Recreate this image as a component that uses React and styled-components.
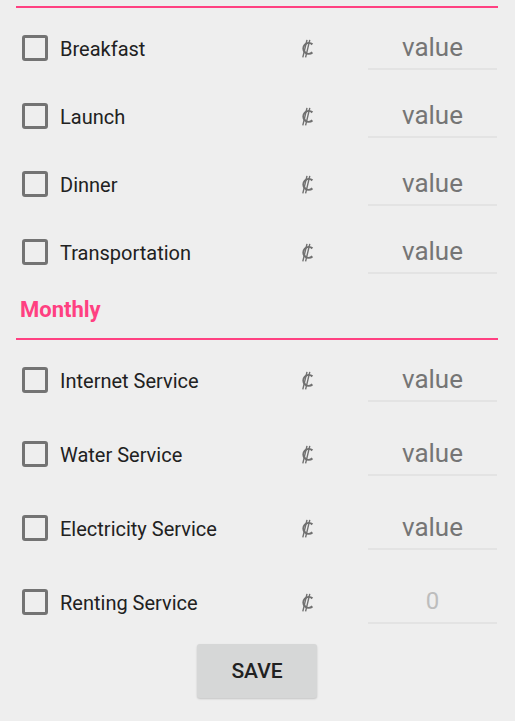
import React from "react";
import styled, { createGlobalStyle } from "styled-components";

const Global = createGlobalStyle`
  html, body { margin: 0; padding: 0; background: #eeeeee; }
  body { font-family: Roboto, "Noto Sans", "DejaVu Sans", sans-serif; }
  * { box-sizing: border-box; }
`;

const Page = styled.div`
  width: 515px;
  min-height: 721px;
  background: #eeeeee;
  padding: 6px 17px 0 16px;
  display: flex;
  flex-direction: column;
`;

const Divider = styled.div`
  height: 2px;
  background: #ff4081;
`;

const Section = styled.div`
  display: flex;
  flex-direction: column;
  padding-top: ${(p) => p.$top}px;
`;

const Row = styled.div`
  height: ${(p) => p.$h}px;
  display: grid;
  grid-template-columns: 1fr 68px 129px;
  align-items: center;
  padding-left: 6px;
  padding-right: 1px;
`;

const CheckLabel = styled.label`
  display: flex;
  align-items: center;
  gap: 12px;
  font-size: 20px;
  color: #212121;
  cursor: pointer;
  padding-top: 1px;
`;

const Box = styled.span`
  width: 26px;
  height: 26px;
  border: 3px solid #737373;
  border-radius: 3px;
  flex: none;
  margin-top: -1px;
`;

const Currency = styled.svg`
  width: 14px;
  height: 19px;
  display: block;
  margin-top: 1px;
`;

const Field = styled.div`
  height: 44px;
  border-bottom: 2px solid #e3e3e3;
  display: flex;
  align-items: center;
  justify-content: center;
  font-size: ${(p) => (p.$light ? 24 : 26)}px;
  color: ${(p) => (p.$light ? "#bdbdbd" : "#757575")};
`;

const Header = styled.div`
  padding: 10px 0 14px 4px;
  font-size: 22px;
  line-height: 28px;
  font-weight: 700;
  color: #ff4081;
`;

const ButtonWrap = styled.div`
  display: flex;
  justify-content: center;
  padding-top: 5px;
`;

const SaveButton = styled.button`
  width: 120px;
  height: 54px;
  border: none;
  border-radius: 3px;
  background: #d6d7d7;
  box-shadow: 0 1px 2px rgba(0, 0, 0, 0.18);
  font-family: Roboto, sans-serif;
  font-weight: 500;
  font-size: 21px;
  color: #212121;
  cursor: pointer;
`;

const daily = ["Breakfast", "Launch", "Dinner", "Transportation"];
const monthly = [
  { name: "Internet Service", value: "value" },
  { name: "Water Service", value: "value" },
  { name: "Electricity Service", value: "value" },
  { name: "Renting Service", value: "0", light: true },
];

function CediSign() {
  return (
    <Currency viewBox="0 0 14 19" aria-label="₵">
      <path
        d="M12.4 5.4 A5.4 5.4 0 1 0 12.4 13.4"
        fill="none"
        stroke="#707070"
        strokeWidth="2.1"
      />
      <path d="M7 0.8 L2.8 18.4 M9.8 0.8 L5.6 18.4" stroke="#707070" strokeWidth="1.4" />
    </Currency>
  );
}

function ExpenseRow({ name, value, light, h }) {
  return (
    <Row $h={h}>
      <CheckLabel>
        <Box />
        {name}
      </CheckLabel>
      <CediSign />
      <Field $light={light}>{value}</Field>
    </Row>
  );
}

export default function App() {
  return (
    <>
      <Global />
      <Page>
        <Divider />
        <Section $top={6}>
          {daily.map((n) => (
            <ExpenseRow key={n} name={n} value="value" h={68} />
          ))}
        </Section>
        <Header>Monthly</Header>
        <Divider />
        <Section $top={3}>
          {monthly.map((m) => (
            <ExpenseRow key={m.name} name={m.name} value={m.value} light={m.light} h={74} />
          ))}
        </Section>
        <ButtonWrap>
          <SaveButton>SAVE</SaveButton>
        </ButtonWrap>
      </Page>
    </>
  );
}
